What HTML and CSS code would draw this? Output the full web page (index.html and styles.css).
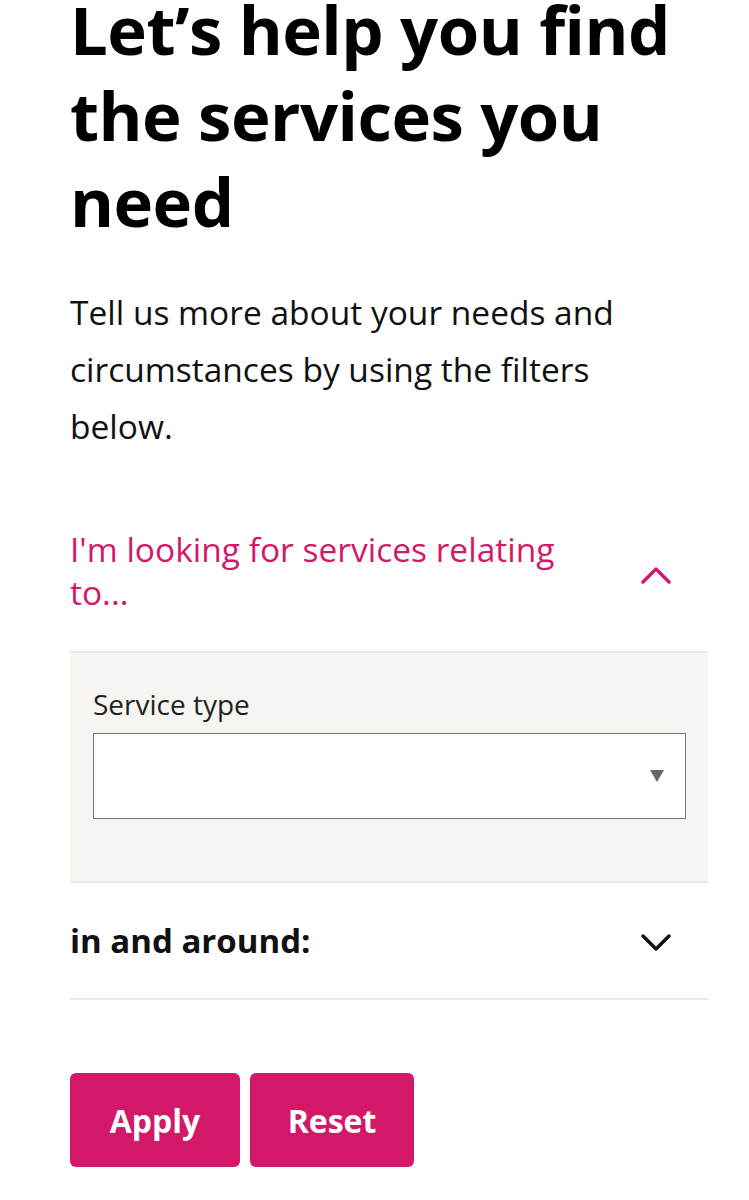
FILE: index.html
```html
<!DOCTYPE html>
<html lang="en">
<head>
<meta charset="utf-8">
<title>Find services</title>
<link rel="stylesheet" href="styles.css">
</head>
<body>
<main class="page">
  <h1 class="title">Let’s help you find the services you need</h1>
  <p class="intro">Tell us more about your needs and circumstances by using the filters below.</p>

  <section class="filters">
    <div class="acc acc-open">
      <div class="acc-head">
        <span class="acc-title pink">I'm looking for services relating to...</span>
        <svg class="chev chev-up" viewBox="0 0 32 20" width="32" height="20"><path d="M3 17 L16 4 L29 17" fill="none" stroke="#d3186a" stroke-width="3.4" stroke-linecap="round" stroke-linejoin="round"/></svg>
      </div>
      <div class="acc-body">
        <label class="field-label">Service type</label>
        <div class="select">
          <span class="tri"></span>
        </div>
      </div>
    </div>
    <div class="acc">
      <div class="acc-head acc-head-closed">
        <span class="acc-title dark">in and around:</span>
        <svg class="chev chev-down" viewBox="0 0 32 20" width="32" height="20"><path d="M3 3 L16 16 L29 3" fill="none" stroke="#111" stroke-width="3.4" stroke-linecap="round" stroke-linejoin="round"/></svg>
      </div>
    </div>
  </section>

  <div class="actions">
    <button class="btn btn-apply">Apply</button>
    <button class="btn btn-reset">Reset</button>
  </div>
</main>
</body>
</html>
```
FILE: styles.css
```css
html, body {
  margin: 0;
  padding: 0;
  background: #ffffff;
}
body {
  font-family: "Open Sans", "Noto Sans", "Liberation Sans", sans-serif;
  color: #111;
}
.page {
  width: 638px;
  padding: 0 0 0 70px;
}
.title {
  margin: -14px 0 0 0;
  font-size: 67px;
  line-height: 86px;
  font-weight: 700;
  color: #000;
  letter-spacing: -0.5px;
}
.intro {
  margin: 40px 0 0 0;
  font-size: 33.5px;
  line-height: 57px;
  color: #111;
  width: 610px;
}
.filters {
  margin-top: 73px;
}
.acc-head {
  display: flex;
  align-items: center;
  justify-content: space-between;
}
.acc-open .acc-head {
  padding-bottom: 37px;
}
.acc-title {
  font-size: 33.5px;
  line-height: 43px;
}
.pink {
  color: #d3186a;
  width: 545px;
}
.dark {
  font-weight: 700;
  font-size: 33px;
  color: #111;
}
.chev {
  margin-right: 36px;
  flex: none;
}
.chev-up {
  margin-top: 8px;
}
.chev-down {
  margin-top: 4px;
}
.acc-body {
  background: #f6f5f1;
  border-top: 2px solid #e9e8e3;
  border-bottom: 2px solid #e9e8e3;
  padding: 35px 22px 62px 23px;
}
.field-label {
  display: block;
  font-size: 28px;
  line-height: 32px;
  color: #222;
  margin-bottom: 13px;
}
.select {
  box-sizing: border-box;
  height: 86px;
  background: #fff;
  border: 1.5px solid #777;
  display: flex;
  align-items: center;
  justify-content: flex-end;
  padding-right: 21px;
}
.tri {
  width: 0;
  height: 0;
  border-left: 7px solid transparent;
  border-right: 7px solid transparent;
  border-top: 12px solid #666;
}
.acc-head-closed {
  height: 115px;
  border-bottom: 2px solid #ebeae6;
}
.actions {
  display: flex;
  gap: 10px;
  margin-top: 73px;
}
.btn {
  background: #d3186a;
  color: #fff;
  border: none;
  border-radius: 6px;
  font-family: "Open Sans", "Noto Sans", sans-serif;
  font-weight: 700;
  font-size: 32px;
  height: 94px;
  padding: 0;
  cursor: pointer;
}
.btn-apply { width: 170px; }
.btn-reset { width: 164px; }
```
